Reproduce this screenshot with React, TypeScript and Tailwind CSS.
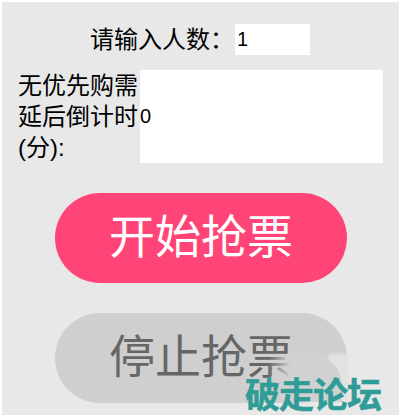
const cjk = "font-['Liberation_Sans','Noto_Sans_CJK_SC',sans-serif]";

export default function App() {
  return (
    <div className={`relative h-[417px] w-[401px] overflow-hidden bg-white pl-[2px] pt-[2px] ${cjk} text-black`}>
      <div className="h-[413px] w-[397px] bg-[#e8e8e8]">
        <div className="flex items-start pl-[88px] pt-[22px]">
          <label className="w-[145px] text-[24px] leading-[31px]">请输入人数：</label>
          <div className="h-[31px] w-[75px] bg-white pl-[2px] text-[20px] leading-[31px]">1</div>
        </div>
        <div className="flex items-center pl-[16px] pt-[15px]">
          <label className="w-[122px] text-[24px] leading-[31px] whitespace-nowrap">
            无优先购需
            <br />
            延后倒计时
            <br />
            (分):
          </label>
          <div className="flex h-[93px] w-[243px] items-center bg-white pb-[2px] text-[20px]">0</div>
        </div>
        <div className="flex flex-col pl-[53px] pt-[30px]">
          <button className="h-[90px] w-[292px] rounded-[45px] bg-[#ff4577] pb-[2px] text-[46px] text-white">开始抢票</button>
          <button className="mt-[30px] h-[90px] w-[292px] rounded-[45px] bg-[#cfcfcf] pb-[2px] text-[46px] text-[#666666]">停止抢票</button>
        </div>
      </div>
      {/* smudge left behind under the forum watermark */}
      <div className="absolute left-[328px] top-[354px] h-[44px] w-[20px] bg-[#e2e2e2] blur-[1px]" />
      <div className="absolute left-[268px] top-[354px] h-[48px] w-[74px] rounded-tr-[32px] bg-linear-to-r from-transparent from-0% to-[#d1d1d1] to-30%" />
      <div className="absolute bottom-[3px] left-[245px] text-[35px] font-bold leading-[36px] tracking-[-1px] text-[#2f9c97] [-webkit-text-stroke:0.5px_#2f9c97]">
        破走论坛
      </div>
    </div>
  );
}
